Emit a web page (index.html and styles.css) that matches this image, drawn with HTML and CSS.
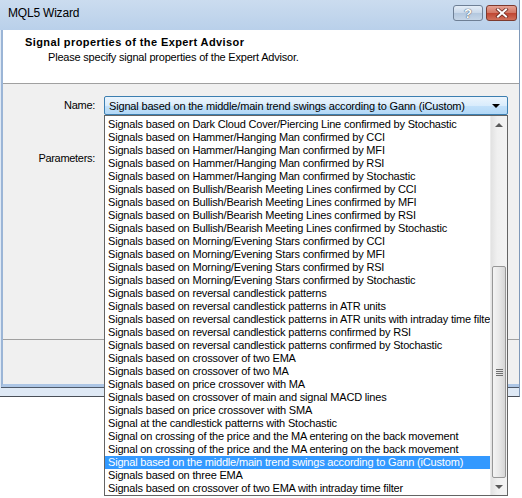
FILE: index.html
```
<!DOCTYPE html>
<html>
<head>
	<meta charset="utf-8" />
	<title>MQL5 Wizard</title>
	<link rel="stylesheet" href="styles.css">
</head>
<body>
	<div class="window">
		<div class="titlebar">
			<span class="title">MQL5 Wizard</span>
			<div class="capbtns">
				<span class="capbtn help">?</span>
				<span class="capbtn close">
					<svg width="14" height="10" viewBox="0 0 14 10">
						<path d="M3 1.5 L11 8.5 M11 1.5 L3 8.5" stroke="#6b2a20" stroke-width="3.6" stroke-linecap="square"/>
						<path d="M3 1.5 L11 8.5 M11 1.5 L3 8.5" stroke="#fff" stroke-width="2" stroke-linecap="square"/>
					</svg>
				</span>
			</div>
		</div>
		<div class="client">
			<div class="header">
				<div class="h-title">Signal properties of the Expert Advisor</div>
				<div class="h-sub">Please specify signal properties of the Expert Advisor.</div>
			</div>
			<div class="body">
				<div class="row name-row">
					<span class="lbl">Name:</span>
					<div class="combo">
						<span class="combo-text">Signal based on the middle/main trend swings according to Gann (iCustom)</span>
						<span class="combo-arrow"></span>
					</div>
				</div>
				<div class="row params-row">
					<span class="lbl lbl-params">Parameters:</span>
					<div class="params"></div>
				</div>
			</div>
			<div class="buttons"></div>
		</div>
	</div>

	<!-- open combo list, drawn over the dialog -->
	<div class="droplist">
		<ul class="items">
			<li>Signals based on Dark Cloud Cover/Piercing Line confirmed by Stochastic</li>
			<li>Signals based on Hammer/Hanging Man confirmed by CCI</li>
			<li>Signals based on Hammer/Hanging Man confirmed by MFI</li>
			<li>Signals based on Hammer/Hanging Man confirmed by RSI</li>
			<li>Signals based on Hammer/Hanging Man confirmed by Stochastic</li>
			<li>Signals based on Bullish/Bearish Meeting Lines confirmed by CCI</li>
			<li>Signals based on Bullish/Bearish Meeting Lines confirmed by MFI</li>
			<li>Signals based on Bullish/Bearish Meeting Lines confirmed by RSI</li>
			<li>Signals based on Bullish/Bearish Meeting Lines confirmed by Stochastic</li>
			<li>Signals based on Morning/Evening Stars confirmed by CCI</li>
			<li>Signals based on Morning/Evening Stars confirmed by MFI</li>
			<li>Signals based on Morning/Evening Stars confirmed by RSI</li>
			<li>Signals based on Morning/Evening Stars confirmed by Stochastic</li>
			<li>Signals based on reversal candlestick patterns</li>
			<li>Signals based on reversal candlestick patterns in ATR units</li>
			<li>Signals based on reversal candlestick patterns in ATR units with intraday time filter</li>
			<li>Signals based on reversal candlestick patterns confirmed by RSI</li>
			<li>Signals based on reversal candlestick patterns confirmed by Stochastic</li>
			<li>Signals based on crossover of two EMA</li>
			<li>Signals based on crossover of two MA</li>
			<li>Signals based on price crossover with MA</li>
			<li>Signals based on crossover of main and signal MACD lines</li>
			<li>Signals based on price crossover with SMA</li>
			<li>Signal at the candlestick patterns with Stochastic</li>
			<li>Signal on crossing of the price and the MA entering on the back movement</li>
			<li>Signal on crossing of the price and the MA entering on the back movement</li>
			<li class="selected">Signal based on the middle/main trend swings according to Gann (iCustom)</li>
			<li>Signals based on three EMA</li>
			<li>Signals based on crossover of two EMA with intraday time filter</li>
		</ul>
		<div class="vscroll">
			<div class="sbtn"><span class="arr-up"></span></div>
			<div class="track"></div>
			<div class="thumb"><span class="grip"></span></div>
			<div class="sbtn"><span class="arr-down"></span></div>
		</div>
	</div>
</body>
</html>
```

FILE: styles.css
```
*{
	margin: 0;
	padding: 0;
	box-sizing: border-box;
}
body{
	background: #fff;
	font-family: "Liberation Sans", Arial, sans-serif;
	font-size: 11px;
	color: #000;
}
.window{
	width: 520px;
	height: 397px;
	background: #dfe9f5;
	border-right: 1px solid #7f98b8;
	border-bottom: 1px solid #4a4f57;
}
.titlebar{
	height: 30px;
	display: flex;
	justify-content: space-between;
	align-items: flex-start;
	padding: 5px 2px 0 8px;
	background: linear-gradient(#cbdcef, #b9d0ea);
}
.title{
	font-size: 12px;
	line-height: 16px;
	letter-spacing: -0.2px;
}
.capbtns{
	display: flex;
	gap: 3px;
}
.capbtn{
	display: flex;
	align-items: center;
	justify-content: center;
	height: 16px;
	border-radius: 3px;
}
.help{
	width: 30px;
	border: 1px solid #6e7f95;
	background: linear-gradient(#e4edf7 0%, #c9d8ea 50%, #b3c7de 51%, #c6d6e8 100%);
	color: #fff;
	font-weight: bold;
	font-size: 13px;
	text-shadow: 0 0 1px #3d4c60, 0 0 1px #3d4c60;
}
.close{
	width: 31px;
	border: 1px solid #7d3a2e;
	background: linear-gradient(#e6a394 0%, #d27562 50%, #bf4531 51%, #d0705a 100%);
}
.client{
	margin-left: 1px;
	border-left: 2px solid #9bb5d6;
	border-bottom: 3px solid #adc6e5;
	box-shadow: 0 1px 0 #4e5968;
	background: #f0f0f0;
}
.header{
	height: 54px;
	background: #fff;
	border-bottom: 1px solid #a0a0a0;
	padding: 5px 0 0 22px;
}
.h-title{
	font-weight: bold;
	line-height: 14px;
	letter-spacing: 0.4px;
}
.h-sub{
	margin: 2px 0 0 23px;
	line-height: 13px;
	letter-spacing: -0.2px;
}
.body{
	height: 255px;
	padding-top: 12px;
}
.row{
	display: flex;
	gap: 9px;
}
.lbl{
	width: 92px;
	text-align: right;
	line-height: 19px;
	letter-spacing: -0.3px;
}
.lbl-params{
	padding-top: 35px;
	line-height: 13px;
}
.combo{
	width: 404px;
	height: 19px;
	display: flex;
	align-items: center;
	justify-content: space-between;
	padding: 0 7px 0 4px;
	border: 1px solid #3c7fb1;
	border-radius: 2px;
	background: linear-gradient(#ecf5fd 0%, #d9ecfc 50%, #c3e1fa 51%, #b2d8f7 100%);
}
.combo-text{
	letter-spacing: -0.17px;
}
.combo-arrow{
	width: 0;
	height: 0;
	border-left: 4px solid transparent;
	border-right: 4px solid transparent;
	border-top: 4px solid #000;
}
.params-row{
	margin-top: 2px;
}
.params{
	width: 404px;
	height: 222px;
	background: #fff;
	border: 1px solid #828790;
}
.buttons{
	height: 45px;
	border-top: 1px solid #a0a0a0;
}

/* dropdown list */
.droplist{
	position: absolute;
	left: 104px;
	top: 115px;
	width: 404px;
	height: 381px;
	display: flex;
	background: #fff;
	border: 1px solid #646464;
}
.items{
	flex: 1;
	list-style: none;
	padding-top: 2px;
	overflow: hidden;
}
.items li{
	height: 13px;
	line-height: 13px;
	padding-left: 3px;
	white-space: nowrap;
	overflow: hidden;
	letter-spacing: -0.18px;
}
.items .selected{
	background: #3399ff;
	color: #fff;
}
.vscroll{
	width: 17px;
	display: flex;
	flex-direction: column;
	background: linear-gradient(to right, #e2e2e2, #f0f0f0 40%, #f3f3f3);
	border-left: 1px solid #ececec;
}
.sbtn{
	height: 17px;
	display: flex;
	align-items: center;
	justify-content: center;
}
.arr-up, .arr-down{
	width: 0;
	height: 0;
	border-left: 4px solid transparent;
	border-right: 4px solid transparent;
}
.arr-up{
	border-bottom: 4px solid #5a5a5a;
}
.arr-down{
	border-top: 4px solid #5a5a5a;
}
.track{
	flex: 1;
}
.thumb{
	height: 212px;
	margin: 0 1px;
	display: flex;
	align-items: center;
	justify-content: center;
	border: 1px solid #979797;
	border-radius: 2px;
	background: linear-gradient(to right, #f4f4f4, #e8e8e8 50%, #d6d6d6);
}
.grip{
	width: 7px;
	height: 7px;
	background: repeating-linear-gradient(#707070 0 1px, transparent 1px 2px);
}
```
